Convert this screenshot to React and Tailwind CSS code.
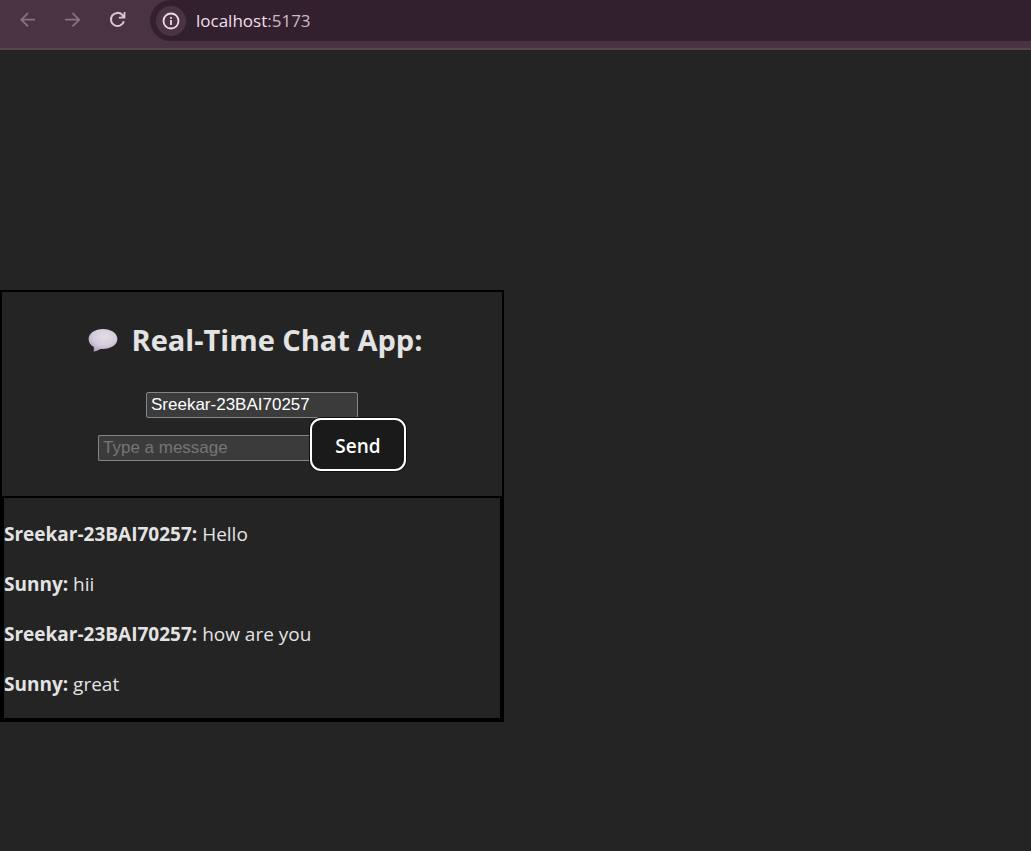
import { useState } from "react";

const initialMessages = [
  { user: "Sreekar-23BAI70257", text: "Hello" },
  { user: "Sunny", text: "hii" },
  { user: "Sreekar-23BAI70257", text: "how are you" },
  { user: "Sunny", text: "great" },
];

function BrowserBar() {
  return (
    <header className="flex h-[50px] items-start border-b-2 border-[#564850] bg-[#4a3444]">
      <nav className="flex h-10 shrink-0 items-center gap-[25px] pr-[22px] pl-[18px]">
        <button type="button" aria-label="Back" className="text-[#86717f]">
          <svg viewBox="0 0 20 20" className="size-5" fill="none" stroke="currentColor" strokeWidth="1.8">
            <path d="M17 9.7H3.8M10 3L3.3 9.7L10 16.4" />
          </svg>
        </button>
        <button type="button" aria-label="Forward" className="text-[#86717f]">
          <svg viewBox="0 0 20 20" className="size-5" fill="none" stroke="currentColor" strokeWidth="1.8">
            <path d="M2 9.7H15.7M9.5 3L16.2 9.7L9.5 16.4" />
          </svg>
        </button>
        <button type="button" aria-label="Reload" className="text-[#dcc5d5]">
          <svg viewBox="0 0 20 20" className="size-5" fill="none" stroke="currentColor" strokeWidth="2">
            <path d="M15.9 11.2A6.6 6.6 0 1 1 14.2 4.8L15.6 6.2" />
            <path d="M17.4 2V8.6H10.8V6.8H13.4L15.6 4.6V2Z" fill="currentColor" stroke="none" />
          </svg>
        </button>
      </nav>
      <div className="flex h-[41px] min-w-0 flex-1 items-center gap-[10px] rounded-l-full bg-[#33202e] pl-[6px]">
        <button
          type="button"
          aria-label="Site information"
          className="flex size-[30px] items-center justify-center rounded-full bg-[#4a3444] text-[#eedbe8]"
        >
          <svg viewBox="0 0 18 18" className="size-[18px]" fill="none" stroke="currentColor" strokeWidth="1.8">
            <circle cx="9" cy="9" r="7.5" />
            <path d="M9 8V13M9 5V6.8" />
          </svg>
        </button>
        <span className="font-['Open_Sans','Noto_Sans',sans-serif] text-[17px] text-[#f2dfec]">
          localhost<span className="text-[#cdb9c7]">:5173</span>
        </span>
      </div>
    </header>
  );
}

function SpeechBubble() {
  return (
    <svg viewBox="0 0 30 24" className="h-6 w-[30px]" aria-hidden="true">
      <defs>
        <radialGradient id="bubble" cx="0.55" cy="0.35" r="0.65">
          <stop offset="0" stopColor="#e2dce5" />
          <stop offset="0.6" stopColor="#d6cddb" />
          <stop offset="1" stopColor="#b5a3c3" />
        </radialGradient>
      </defs>
      <path
        d="M15 1C7 1 0.6 5.2 0.6 11C0.6 14.6 2.6 17.2 5.8 19C6.1 20.6 5.9 22 5.6 23.4C8.4 23.1 10.8 22.1 12.4 20.9C22 21.6 29.4 17.2 29.4 11C29.4 5.2 23 1 15 1Z"
        fill="url(#bubble)"
      />
    </svg>
  );
}

export default function App() {
  const [name, setName] = useState("Sreekar-23BAI70257");
  const [draft, setDraft] = useState("");
  const [messages, setMessages] = useState(initialMessages);

  function send(event) {
    event.preventDefault();
    if (!draft.trim()) return;
    setMessages([...messages, { user: name, text: draft }]);
    setDraft("");
  }

  return (
    <div className="flex min-h-screen flex-col bg-[#242424] font-['Open_Sans','Noto_Sans',sans-serif] text-[#e3e3e3]">
      <BrowserBar />
      <main className="pt-60">
        <section className="w-full max-w-[504px] border-2 border-black">
          <form onSubmit={send} className="flex flex-col items-center pt-[29px] pb-[25px]">
            <h1 className="flex items-center gap-[14px] pl-[6px] text-[29px] leading-[38px] font-bold">
              <SpeechBubble />
              Real-Time Chat App:
            </h1>
            <input
              aria-label="Your name"
              value={name}
              onChange={(event) => setName(event.target.value)}
              className="mt-[33px] h-[26px] w-[212px] rounded-[2px] border border-[#858585] bg-[#3b3b3b] px-1 font-['Liberation_Sans',sans-serif] text-[17px] text-white outline-none"
            />
            <div className="flex items-center">
              <input
                aria-label="Message"
                placeholder="Type a message"
                value={draft}
                onChange={(event) => setDraft(event.target.value)}
                className="mt-[6px] h-[26px] w-[212px] rounded-l-[2px] border border-r-0 border-[#858585] bg-[#3b3b3b] px-1 font-['Liberation_Sans',sans-serif] text-[17px] text-white outline-none placeholder:text-[#757575]"
              />
              <button
                type="submit"
                className="h-[53px] w-24 rounded-[11px] border-2 border-white bg-[#1a1a1a] pt-1 text-[19px] font-semibold text-white ring-1 ring-[#101010]"
              >
                Send
              </button>
            </div>
          </form>
          <div className="border-2 border-black pt-[11px] pb-[9px]">
            {messages.map((message, index) => (
              <p key={index} className="text-[19px] leading-[50px]">
                <strong className="font-bold">{message.user}:</strong> {message.text}
              </p>
            ))}
          </div>
        </section>
      </main>
    </div>
  );
}
